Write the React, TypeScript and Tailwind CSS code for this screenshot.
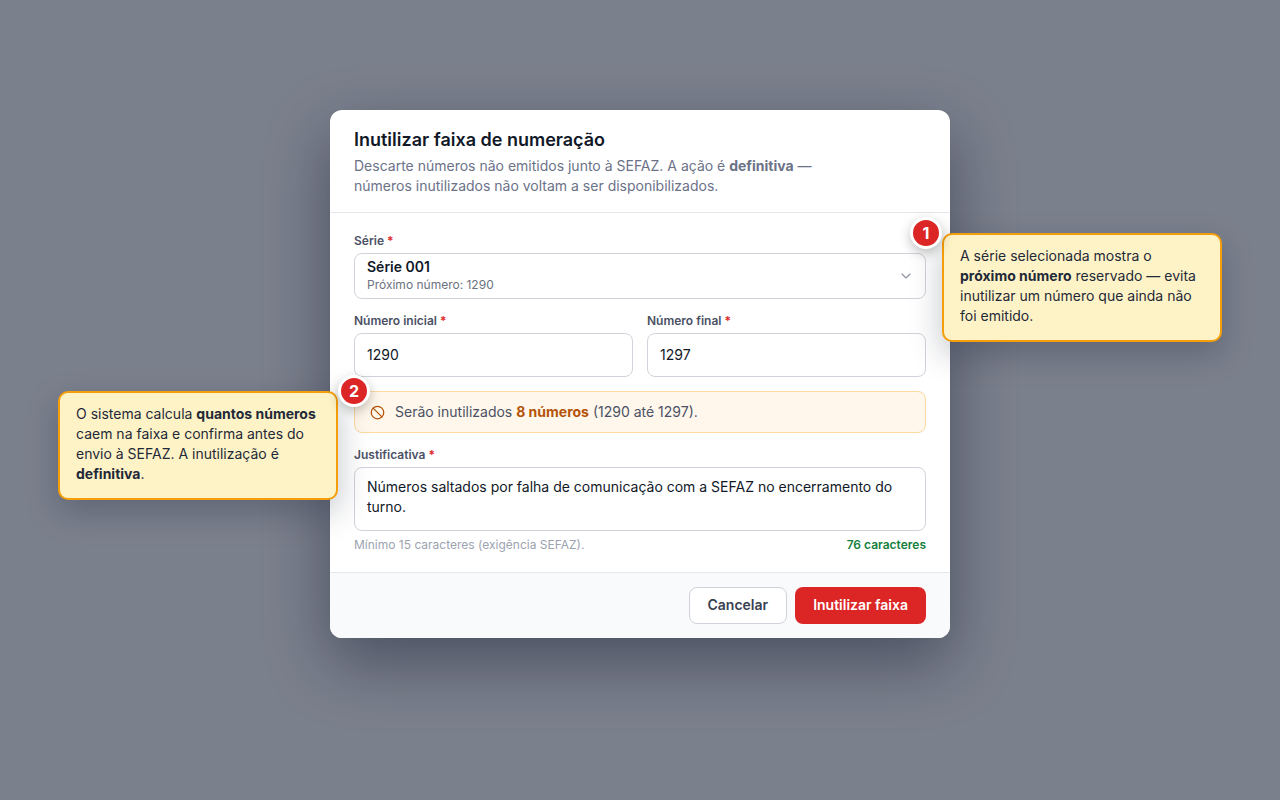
import { useState, type ReactNode } from "react";
import { Ban, ChevronDown } from "lucide-react";

function Label({ htmlFor, children }: { htmlFor: string; children: ReactNode }) {
  return (
    <label htmlFor={htmlFor} className="mb-1 block text-xs leading-4 font-semibold text-[#4b5165]">
      {children} <span className="text-[#dc2626]">*</span>
    </label>
  );
}

function Marker({ className, children }: { className: string; children: ReactNode }) {
  return (
    <span
      className={`absolute z-20 flex size-8 items-center justify-center rounded-full border-3 border-white bg-[#dc2626] text-base font-bold text-white shadow-[0_4px_12px_rgba(0,0,0,0.25)] ${className}`}
    >
      {children}
    </span>
  );
}

function Callout({ className, children }: { className: string; children: ReactNode }) {
  return (
    <aside
      className={`absolute z-10 w-[280px] rounded-[10px] border-2 border-[#f59e0b] bg-[#fef3c7] px-4 pt-[11px] pb-[14px] text-sm leading-5 text-[#1f2937] shadow-[0_12px_32px_rgba(15,23,42,0.25)] ${className}`}
    >
      {children}
    </aside>
  );
}

const fieldClass =
  "block w-full rounded-lg border border-[#d0d3db] bg-white px-3 text-sm text-[#111827] outline-none";

export default function App() {
  const [first, setFirst] = useState("1290");
  const [last, setLast] = useState("1297");
  const [reason, setReason] = useState(
    "Números saltados por falha de comunicação com a SEFAZ no encerramento do turno.",
  );

  return (
    <main className="flex min-h-screen items-start justify-center overflow-hidden bg-[#7b808d] pt-[110px] font-['Inter',sans-serif]">
      <form
        role="dialog"
        aria-labelledby="title"
        className="w-full max-w-[620px] rounded-xl bg-white shadow-[0_24px_64px_rgba(15,23,42,0.45)]"
      >
        <header className="border-b border-[#e5e7eb] px-6 pt-[18px] pb-4">
          <h1 id="title" className="text-lg leading-6 font-semibold text-[#111827]">
            Inutilizar faixa de numeração
          </h1>
          <p className="mt-1 max-w-[460px] text-sm leading-5 text-[#6b7288]">
            Descarte números não emitidos junto à SEFAZ. A ação é <strong>definitiva</strong> — números
            inutilizados não voltam a ser disponibilizados.
          </p>
        </header>

        <div className="flex flex-col gap-[14px] px-6 pt-5 pb-[19px]">
          <div className="relative">
            <Label htmlFor="serie">Série</Label>
            <div className="grid *:col-start-1 *:row-start-1">
              <select
                id="serie"
                className="h-[46px] w-full appearance-none rounded-lg border border-[#d0d3db] bg-white pr-8 pb-[18px] pl-3 text-sm font-semibold text-[#111827] outline-none"
              >
                <option>Série 001</option>
              </select>
              <div className="pointer-events-none flex items-center justify-between pr-3 pl-[13px]">
                <span className="self-end pb-[6px] text-xs leading-4 text-[#6b7280]">Próximo número: 1290</span>
                <ChevronDown size={16} strokeWidth={1.75} className="text-[#9096a3]" />
              </div>
            </div>
            <Marker className="-top-4 -right-4">1</Marker>
            <Callout className="top-0 left-full ml-4">
              A série selecionada mostra o <strong>próximo número</strong> reservado — evita inutilizar um número que
              ainda não foi emitido.
            </Callout>
          </div>

          <div className="grid grid-cols-2 gap-[14px]">
            <div>
              <Label htmlFor="first">Número inicial</Label>
              <input
                id="first"
                value={first}
                onChange={(e) => setFirst(e.target.value)}
                className={`h-11 pb-[2px] ${fieldClass}`}
              />
            </div>
            <div>
              <Label htmlFor="last">Número final</Label>
              <input
                id="last"
                value={last}
                onChange={(e) => setLast(e.target.value)}
                className={`h-11 pb-[2px] ${fieldClass}`}
              />
            </div>
          </div>

          <div className="relative">
            <p className="flex h-[42px] items-center gap-[10px] rounded-lg border border-[#fcd9a0] bg-[#fff7eb] px-[15px] text-sm text-[#4b5165]">
              <Ban size={15} className="shrink-0 text-[#b45309]" />
              <span>
                Serão inutilizados <strong className="text-[#b45309]">8 números</strong> (1290 até 1297).
              </span>
            </p>
            <Marker className="-top-4 -left-4">2</Marker>
            <Callout className="top-0 right-full mr-4">
              O sistema calcula <strong>quantos números</strong> caem na faixa e confirma antes do envio à SEFAZ. A
              inutilização é <strong>definitiva</strong>.
            </Callout>
          </div>

          <div>
            <Label htmlFor="reason">Justificativa</Label>
            <textarea
              id="reason"
              rows={2}
              value={reason}
              onChange={(e) => setReason(e.target.value)}
              className={`h-16 resize-none py-[9px] leading-5 ${fieldClass}`}
            />
            <div className="mt-[6px] flex justify-between text-xs leading-4">
              <span className="text-[#9ca3af]">Mínimo 15 caracteres (exigência SEFAZ).</span>
              <span className="font-semibold text-[#15803d]">76 caracteres</span>
            </div>
          </div>
        </div>

        <footer className="flex justify-end gap-2 rounded-b-xl border-t border-[#e5e7eb] bg-[#f9fafc] px-6 py-[14px]">
          <button
            type="button"
            className="h-[37px] rounded-lg border border-[#d0d3db] bg-white px-[18px] pb-[2px] text-sm font-semibold text-[#374151]"
          >
            Cancelar
          </button>
          <button
            type="submit"
            className="h-[37px] rounded-lg bg-[#dc2626] px-[18px] pb-[2px] text-sm font-semibold text-white"
          >
            Inutilizar faixa
          </button>
        </footer>
      </form>
    </main>
  );
}
